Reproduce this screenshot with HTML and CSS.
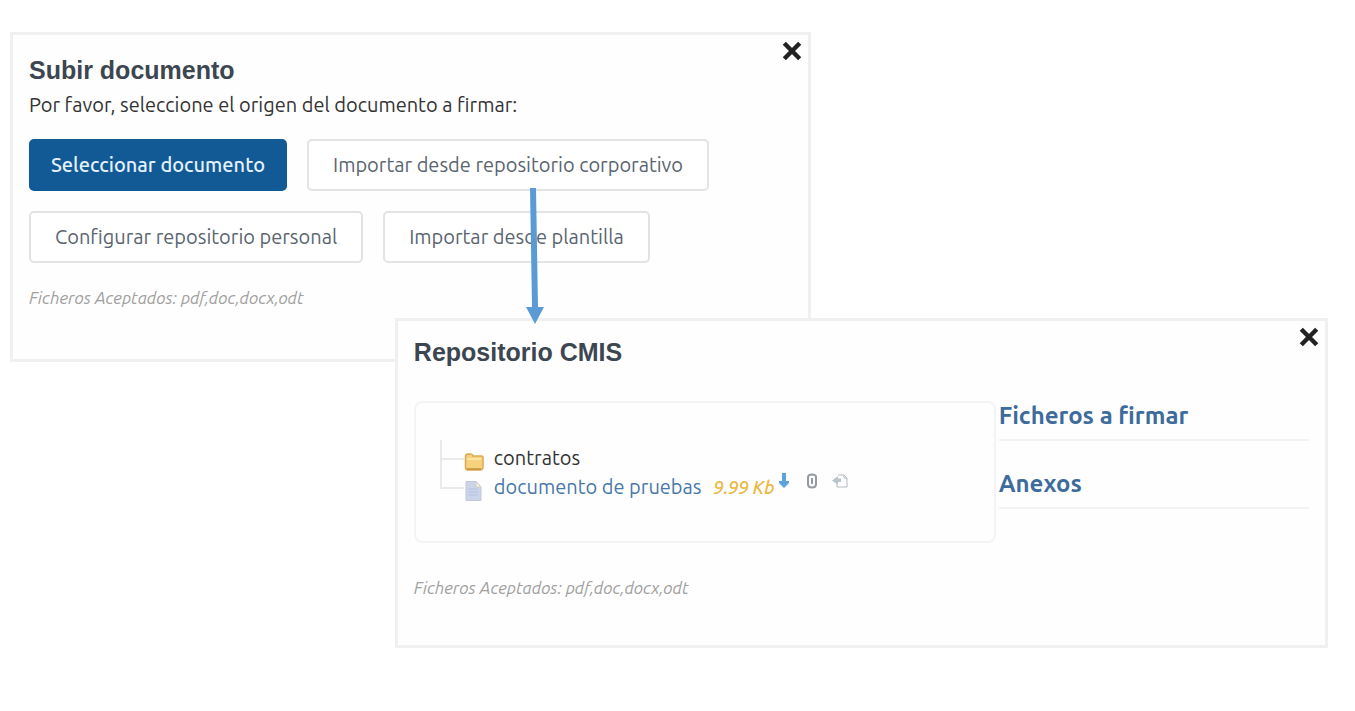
FILE: index.html
```html
<!DOCTYPE html>
<html lang="es">
<head>
    <meta charset="UTF-8">
    <meta name="viewport" content="width=device-width, initial-scale=1.0">
    <title>Subir documento</title>
    <link rel="stylesheet" href="styles.css">
</head>
<body>

    <main class="stage">

        <!-- Upload dialog -->
        <section class="dialog dialog-upload">
            <button class="close" type="button" aria-label="Cerrar">
                <svg viewBox="0 0 20 20"><path d="M3 3L17 17M17 3L3 17"/></svg>
            </button>
            <h1>Subir documento</h1>
            <p class="intro">Por favor, seleccione el origen del documento a firmar:</p>
            <div class="actions">
                <button class="btn btn-primary" type="button">Seleccionar documento</button>
                <button class="btn" type="button">Importar desde repositorio corporativo</button>
            </div>
            <div class="actions">
                <button class="btn" type="button">Configurar repositorio personal</button>
                <button class="btn" type="button">Importar desde plantilla</button>
            </div>
            <p class="accepted">Ficheros Aceptados: pdf,doc,docx,odt</p>
        </section>

        <!-- Repository dialog -->
        <section class="dialog dialog-repo">
            <button class="close" type="button" aria-label="Cerrar">
                <svg viewBox="0 0 20 20"><path d="M3 3L17 17M17 3L3 17"/></svg>
            </button>
            <h1>Repositorio CMIS</h1>
            <div class="repo">
                <div class="tree-box">
                    <ul class="tree">
                        <li>
                            <svg class="node-icon" viewBox="0 0 20 20">
                                <path d="M1.500 5Q1.500 2 4 2H7Q8.500 2 9 4H17.500Q19 4 19 6V15Q19 18 16 18H4Q1.500 18 1.500 15Z" fill="#f7d27c" stroke="#dda94f" stroke-width="1.500"/>
                                <path d="M3 7H17.500" stroke="#fdebb5" stroke-width="1.500"/>
                                <path d="M3 17H17" stroke="#c48c3c" stroke-width="1.500"/>
                            </svg>
                            <span>contratos</span>
                        </li>
                        <li>
                            <svg class="node-icon" viewBox="0 0 20 20">
                                <path d="M2 0.500H12L17 6V19.500H2Z" fill="#ccd4ea" stroke="#c3c8d6"/>
                                <path d="M12 0.500V6H17Z" fill="#f6f2df" stroke="#cfcdbf"/>
                                <path d="M4.500 8H14M4.500 11H14M4.500 14H14" stroke="#b5c0e0"/>
                            </svg>
                            <a href="#">documento de pruebas</a>
                            <em class="size">9.99 Kb</em>
                            <span class="tools">
                                <button type="button" aria-label="Descargar">
                                    <svg viewBox="0 0 16 16"><path d="M6 0H10V8H13V10L8 15L3 10V8H6Z" fill="#5ba3dc"/></svg>
                                </button>
                                <button type="button" aria-label="Adjuntar">
                                    <svg viewBox="0 0 16 16"><path d="M12 4V11Q12 14.500 8 14.500T4 11V4.500Q4 1.500 8 1.500T12 4M8 5V11" fill="none" stroke="#9498a0" stroke-width="2"/></svg>
                                </button>
                                <button type="button" aria-label="Copiar">
                                    <svg viewBox="0 0 16 16"><path d="M6 2H12L15 5V14H5V11M12 2V5H15" fill="none" stroke="#b5bbc1"/><path d="M6 3L0 7.500L6 12V9H9V5.500H6Z" fill="#b9c5ca"/></svg>
                                </button>
                            </span>
                        </li>
                    </ul>
                </div>
                <div class="lists">
                    <h2>Ficheros a firmar</h2>
                    <h2>Anexos</h2>
                </div>
            </div>
            <p class="accepted">Ficheros Aceptados: pdf,doc,docx,odt</p>
        </section>

        <svg class="arrow" viewBox="0 0 20 138" aria-hidden="true">
            <path d="M5 1H11L13 120H19L10 137L1 120H7Z" fill="#5b9bd5"/>
        </svg>
    </main>

</body>
</html>
```

FILE: styles.css
```css
* {
    box-sizing: border-box;
}
body {
    font-family: Ubuntu, "Noto Sans", sans-serif;
    font-size: 20px;
    line-height: 28px;
    color: #333;
    background-color: #fff;
    margin: 0;
}
h1, h2, p, ul {
    margin: 0;
}
button {
    font: inherit;
    cursor: pointer;
}
.stage {
    position: relative;
    display: flex;
    flex-direction: column;
    padding: 32px 27px 32px 10px;
}

/* Dialogs */
.dialog {
    position: relative;
    min-height: 330px;
    padding: 20px 16px;
    background-color: #fefefe;
    border: 3px solid #f0f0f0;
}
.dialog-upload {
    width: 60.8%;
}
.dialog-repo {
    width: 70.8%;
    margin-top: -44px;
    align-self: flex-end;
    padding-top: 16px;
}
.dialog h1 {
    font-family: "Liberation Sans", Arial, sans-serif;
    font-size: 25px;
    line-height: 30px;
    color: #3c4650;
}
.close {
    position: absolute;
    top: 5px;
    right: 5px;
    width: 22px;
    height: 22px;
    padding: 0;
    border: none;
    background: none;
}
.close svg {
    display: block;
    width: 22px;
    height: 22px;
    fill: none;
    stroke: #222;
    stroke-width: 4;
}

/* Upload dialog */
.intro {
    line-height: 40px;
    margin-bottom: 14px;
}
.actions {
    display: flex;
    gap: 20px;
    margin-bottom: 20px;
}
.btn {
    height: 52px;
    padding: 0 24px;
    color: #5a6570;
    background-color: #fff;
    border: 2px solid #e2e3e4;
    border-radius: 5px;
    white-space: nowrap;
}
.btn-primary {
    padding: 0 20px;
    font-weight: 500;
    color: #e4f1fb;
    background-color: #125a96;
    border-color: #125a96;
}
.accepted {
    font-size: 17px;
    font-style: italic;
    line-height: 30px;
    color: #a0a0a0;
}

/* Repository dialog */
.repo {
    display: flex;
    gap: 3px;
    margin: 34px 0 30px;
}
.tree-box {
    flex: 0 0 65%;
    padding: 40px 24px;
    border: 2px solid #f4f4f4;
    border-radius: 8px;
}
.tree {
    list-style: none;
    padding: 0;
}
.tree li {
    position: relative;
    display: flex;
    align-items: center;
    height: 29px;
    padding-left: 24px;
    white-space: nowrap;
}
.tree li::before {
    content: "";
    position: absolute;
    left: 0;
    bottom: 12px;
    width: 22px;
    height: 29px;
    border-left: 2px solid #eaeaea;
    border-bottom: 2px solid #eaeaea;
}
.tree li:first-child::before {
    height: 18px;
}
.node-icon {
    width: 20px;
    height: 20px;
    margin-right: 10px;
    margin-top: 8px;
    fill: none;
}
.tree a {
    color: #4878a8;
    text-decoration: none;
}
.size {
    font-size: 18px;
    font-weight: 500;
    margin-left: 12px;
    color: #ecb63c;
}
.tools {
    display: flex;
    gap: 12px;
    margin-left: 2px;
    margin-bottom: 12px;
}
.tools button {
    width: 16px;
    height: 16px;
    padding: 0;
    border: none;
    background: none;
}
.tools svg {
    display: block;
    width: 16px;
    height: 16px;
}
.lists {
    flex: 1;
}
.lists h2 {
    font-size: 24px;
    line-height: 30px;
    color: #3d6c9c;
    padding-bottom: 8px;
    margin-bottom: 28px;
    border-bottom: 2px solid #f2f2f2;
}

/* Arrow between the dialogs */
.arrow {
    position: absolute;
    top: 187px;
    left: 525px;
    width: 20px;
    height: 138px;
}
```
